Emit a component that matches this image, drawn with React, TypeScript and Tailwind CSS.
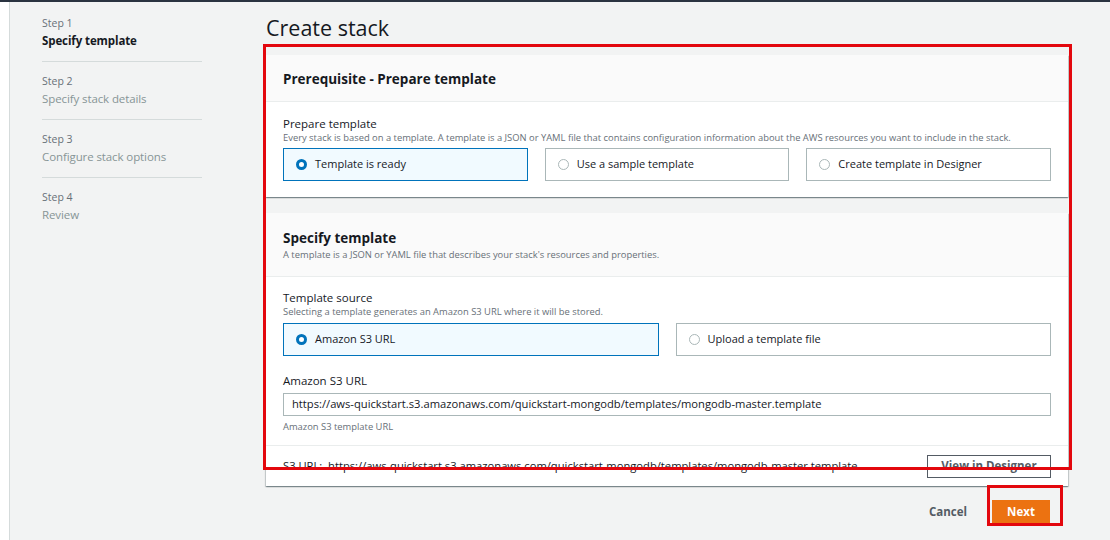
import React from "react";

const font = { fontFamily: '"Open Sans", "Noto Sans", Arial, sans-serif' };

type Step = { num: string; label: string; active?: boolean };

const steps: Step[] = [
  { num: "Step 1", label: "Specify template", active: true },
  { num: "Step 2", label: "Specify stack details" },
  { num: "Step 3", label: "Configure stack options" },
  { num: "Step 4", label: "Review" },
];

const cardShadow =
  "bg-white shadow-[0_1px_1px_rgba(0,28,36,0.3),1px_1px_1px_rgba(0,28,36,0.15),-1px_1px_1px_rgba(0,28,36,0.15)]";

function Radio({ checked }: { checked?: boolean }) {
  if (checked) {
    return <span className="w-[11px] h-[11px] rounded-full border-[3px] border-[#0073bb] bg-white shrink-0" />;
  }
  return <span className="w-[11px] h-[11px] rounded-full border border-[#aab7b8] bg-white shrink-0" />;
}

function Tile({ label, checked }: { label: string; checked?: boolean }) {
  return (
    <div
      className={`flex-1 h-[33px] flex items-center gap-[8px] px-[12px] border ${
        checked ? "border-[#0073bb] bg-[#f1faff]" : "border-[#aab7b8] bg-white"
      }`}
    >
      <Radio checked={checked} />
      <span className="text-[11px] text-[#16191f]">{label}</span>
    </div>
  );
}

export default function App() {
  return (
    <div style={font} className="w-[1110px] h-[540px] overflow-hidden bg-[#f2f3f3] flex flex-col">
      <div className="h-[2px] bg-[#2a3340] shrink-0" />
      <div className="flex flex-1">
        {/* left rail */}
        <div className="w-[10px] bg-white border-r border-[#d5dbdb] shrink-0" />

        {/* wizard nav */}
        <div className="w-[256px] shrink-0 pl-[32px] pt-[14px]">
          {steps.map((s, i) => (
            <div
              key={s.num}
              className={`w-[160px] ${i < steps.length - 1 ? "border-b border-[#d5dbdb] pb-[10px] mb-[12px]" : ""}`}
            >
              <div className="text-[10.5px] leading-[14px] text-[#687078]">{s.num}</div>
              <div
                className={`text-[11.5px] leading-[20px] mt-[1px] tracking-[-0.1px] ${
                  s.active ? "font-bold text-[#16191f]" : "text-[#879596]"
                }`}
              >
                {s.label}
              </div>
            </div>
          ))}
        </div>

        {/* main */}
        <div className="flex-1 flex flex-col">
          <h1 className="text-[21.5px] leading-[28px] text-[#16191f] mt-[12px] font-normal">Create stack</h1>

          <div className="relative mt-[13px] w-[802px]">
            <div className="flex flex-col gap-[16px]">
              {/* card 1 */}
              <div className={cardShadow}>
                <div className="h-[47px] bg-[#fafafa] border-b border-[#eaeded] flex items-center px-[17px] pt-[2px]">
                  <span className="text-[13.5px] font-bold text-[#16191f]">Prerequisite - Prepare template</span>
                </div>
                <div className="px-[17px] pt-[15px] pb-[16px]">
                  <div className="text-[11.5px] leading-[14px] text-[#16191f]">Prepare template</div>
                  <div className="text-[9.4px] leading-[13px] text-[#687078]">
                    Every stack is based on a template. A template is a JSON or YAML file that contains configuration information about the AWS resources you want to include in the stack.
                  </div>
                  <div className="flex gap-[17px] mt-[4px]">
                    <Tile label="Template is ready" checked />
                    <Tile label="Use a sample template" />
                    <Tile label="Create template in Designer" />
                  </div>
                </div>
              </div>

              {/* card 2 */}
              <div className={cardShadow}>
                <div className="h-[64px] bg-[#fafafa] border-b border-[#eaeded] px-[17px] pt-[15px]">
                  <div className="text-[13.5px] leading-[20px] font-bold text-[#16191f]">Specify template</div>
                  <div className="text-[9.4px] leading-[14px] text-[#687078]">
                    A template is a JSON or YAML file that describes your stack's resources and properties.
                  </div>
                </div>
                <div className="px-[17px] pt-[14px] pb-[12px] border-b border-[#eaeded]">
                  <div className="text-[11.5px] leading-[14px] text-[#16191f]">Template source</div>
                  <div className="text-[9.4px] leading-[13px] text-[#687078]">
                    Selecting a template generates an Amazon S3 URL where it will be stored.
                  </div>
                  <div className="flex gap-[17px] mt-[5px]">
                    <Tile label="Amazon S3 URL" checked />
                    <Tile label="Upload a template file" />
                  </div>
                  <div className="text-[11.5px] leading-[14px] text-[#16191f] mt-[18px]">Amazon S3 URL</div>
                  <div className="mt-[5px] h-[23px] border border-[#aab7b8] flex items-center px-[8px] text-[11.2px] text-[#16191f]">
                    https://aws-quickstart.s3.amazonaws.com/quickstart-mongodb/templates/mongodb-master.template
                  </div>
                  <div className="text-[9.4px] leading-[13px] text-[#687078] mt-[4px]">Amazon S3 template URL</div>
                </div>
                <div className="h-[40px] flex items-center justify-between px-[17px]">
                  <span className="text-[11.2px] text-[#16191f]">
                    S3 URL:&nbsp; https://aws-quickstart.s3.amazonaws.com/quickstart-mongodb/templates/mongodb-master.template
                  </span>
                  <span className="w-[124px] h-[23px] border border-[#545b64] flex items-center justify-center text-[11.5px] font-bold text-[#545b64]">
                    View in Designer
                  </span>
                </div>
              </div>
            </div>

            {/* red annotation box */}
            <div className="absolute -left-[3px] -right-[4px] -top-[11px] bottom-[16px] border-[3px] border-[#e3070d] pointer-events-none" />
          </div>

          {/* footer buttons */}
          <div className="w-[802px] flex justify-end items-center mt-[14px] pr-[18px] gap-[25px]">
            <span className="text-[11.5px] font-bold text-[#545b64]">Cancel</span>
            <div className="relative">
              <div className="w-[58px] h-[23px] bg-[#ec7211] flex items-center justify-center text-[11.5px] font-bold text-white">
                Next
              </div>
              <div className="absolute -left-[5px] -right-[13px] -top-[15px] -bottom-[3px] border-[3px] border-[#e3070d] pointer-events-none" />
            </div>
          </div>
        </div>
      </div>
    </div>
  );
}
